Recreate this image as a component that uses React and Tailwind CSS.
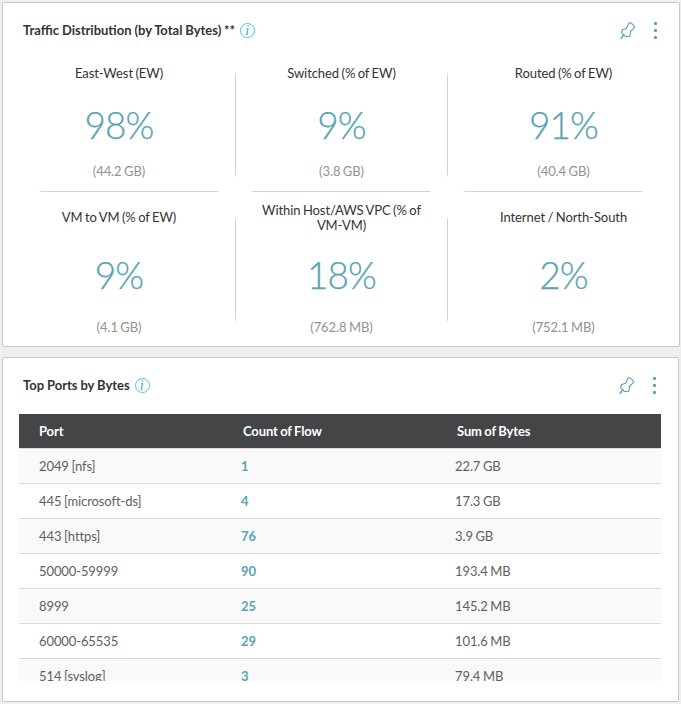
import React from "react";

const stats = [
  { label: "East-West (EW)", value: "98%", size: "(44.2 GB)" },
  { label: "Switched (% of EW)", value: "9%", size: "(3.8 GB)" },
  { label: "Routed (% of EW)", value: "91%", size: "(40.4 GB)" },
  { label: "VM to VM (% of EW)", value: "9%", size: "(4.1 GB)" },
  { label: "Within Host/AWS VPC (% of VM-VM)", value: "18%", size: "(762.8 MB)" },
  { label: "Internet / North-South", value: "2%", size: "(752.1 MB)" },
];

const ports = [
  ["2049 [nfs]", "1", "22.7 GB"],
  ["445 [microsoft-ds]", "4", "17.3 GB"],
  ["443 [https]", "76", "3.9 GB"],
  ["50000-59999", "90", "193.4 MB"],
  ["8999", "25", "145.2 MB"],
  ["60000-65535", "29", "101.6 MB"],
  ["514 [syslog]", "3", "79.4 MB"],
];

function InfoIcon() {
  return (
    <span className="flex size-[15px] items-center justify-center rounded-full border border-[#49c6dd] pr-px font-['Liberation_Serif',serif] text-[14px] leading-none text-[#28b5d3] italic">
      i
    </span>
  );
}

function PinIcon() {
  return (
    <svg width="20" height="20" viewBox="0 0 20 20" fill="none" stroke="#58a4b4" strokeLinejoin="round" strokeLinecap="round">
      <path d="M10.9 2.2Q11.4 1.3 12.4 1.8Q15.2 3.2 16.5 5.6Q16.8 6.6 15.9 7.1L12.4 10.5Q12.6 13 11.7 15.4Q10.2 14.9 8.4 15.6Q7.6 15.9 7 15.1L3.7 11.8Q3.2 11 4 10.6Q4.4 10 4.1 8.7Q6.4 7.9 8.6 7.3Z" strokeWidth="1.1" />
      <path d="M5.7 13.7L3.1 17.4" strokeWidth="1.5" />
    </svg>
  );
}

function MoreIcon() {
  return (
    <span className="flex w-[3px] flex-col gap-1">
      <span className="size-[3px] rounded-[1px] bg-[#58a4b4]" />
      <span className="size-[3px] rounded-[1px] bg-[#58a4b4]" />
      <span className="size-[3px] rounded-[1px] bg-[#58a4b4]" />
    </span>
  );
}

function CardHeader({ title }) {
  return (
    <header className="flex h-[55px] items-center pr-[22px] pl-5">
      <h2 className="mr-[5px] text-[13px] font-bold [word-spacing:-0.3px] text-[#333]">{title}</h2>
      <InfoIcon />
      <span className="flex-1" />
      <PinIcon />
      <span className="w-4" />
      <MoreIcon />
    </header>
  );
}

function Stat({ stat, lower, divider }) {
  return (
    <div className="flex">
      <div className="flex flex-1 flex-col items-center text-center">
        <div className={`flex w-[181px] items-center justify-center text-[13px] leading-[15px] tracking-[-0.07px] [word-spacing:-0.8px] text-[#333] ${lower ? "mt-2.5 h-[31px]" : "h-[30px]"}`}>
          {stat.label}
        </div>
        <div className={`text-[37px] leading-[46px] font-light tracking-[-0.9px] text-[#58a4b4] [-webkit-text-stroke:0.25px_#58a4b4] ${lower ? "mt-[19px]" : "mt-3.5"}`}>{stat.value}</div>
        <div className={`text-[13px] leading-4 tracking-[-0.07px] [word-spacing:-0.8px] text-[#929292] ${lower ? "mt-[21px]" : "mt-[15px]"}`}>{stat.size}</div>
      </div>
      {divider && (
        <div className={`h-[107px] w-px bg-[linear-gradient(transparent,#d2d2d2_4%,#d2d2d2_96%,transparent)] ${lower ? "mt-6" : "mt-[13px]"}`} />
      )}
    </div>
  );
}

const rule = "h-px bg-[linear-gradient(90deg,transparent,#d2d2d2_2%,#d2d2d2_98%,transparent)]";

export default function App() {
  return (
    <main className="flex h-[704px] w-[681px] flex-col gap-2.5 overflow-hidden bg-[#efefef] pt-0.5 pl-0.5 font-[Lato,sans-serif]">
      <section className="h-[345px] w-[678px] rounded-xs border border-[#c8c8c8] bg-white">
        <CardHeader title="Traffic Distribution (by Total Bytes) **" />
        <div className="grid grid-cols-[233px_212px_1fr] grid-rows-[133px_1px_152px]">
          {stats.slice(0, 3).map((s, i) => (
            <Stat key={s.label} stat={s} divider={i < 2} />
          ))}
          <div className={`ml-[35px] mr-4 ${rule}`} />
          <div className={`ml-3.5 mr-4 ${rule}`} />
          <div className={`ml-3.5 mr-[35px] ${rule}`} />
          {stats.slice(3).map((s, i) => (
            <Stat key={s.label} stat={s} lower divider={i < 2} />
          ))}
        </div>
      </section>

      <section className="h-[345px] w-[677px] rounded-xs border border-[#c8c8c8] bg-white">
        <CardHeader title="Top Ports by Bytes" />
        <div className="mt-px ml-4 h-[267px] w-[642px] overflow-hidden text-[13px] [word-spacing:-0.6px]">
          <div className="grid h-[34px] grid-cols-[204px_214px_1fr] items-center bg-[#444547] pt-px pl-5 font-bold tracking-[-0.12px] text-white">
            <span>Port</span>
            <span>Count of Flow</span>
            <span>Sum of Bytes</span>
          </div>
          {ports.map(([port, count, sum]) => (
            <div key={port} className="grid h-[35px] grid-cols-[202px_214px_1fr] items-center border-t border-[#dcdcdc] pt-0.5 pl-5 tracking-[-0.1px] text-[#606060] odd:bg-white even:bg-[#f9f9f9]">
              <span>{port}</span>
              <span className="font-bold text-[#58a4b4]">{count}</span>
              <span>{sum}</span>
            </div>
          ))}
        </div>
      </section>
    </main>
  );
}
